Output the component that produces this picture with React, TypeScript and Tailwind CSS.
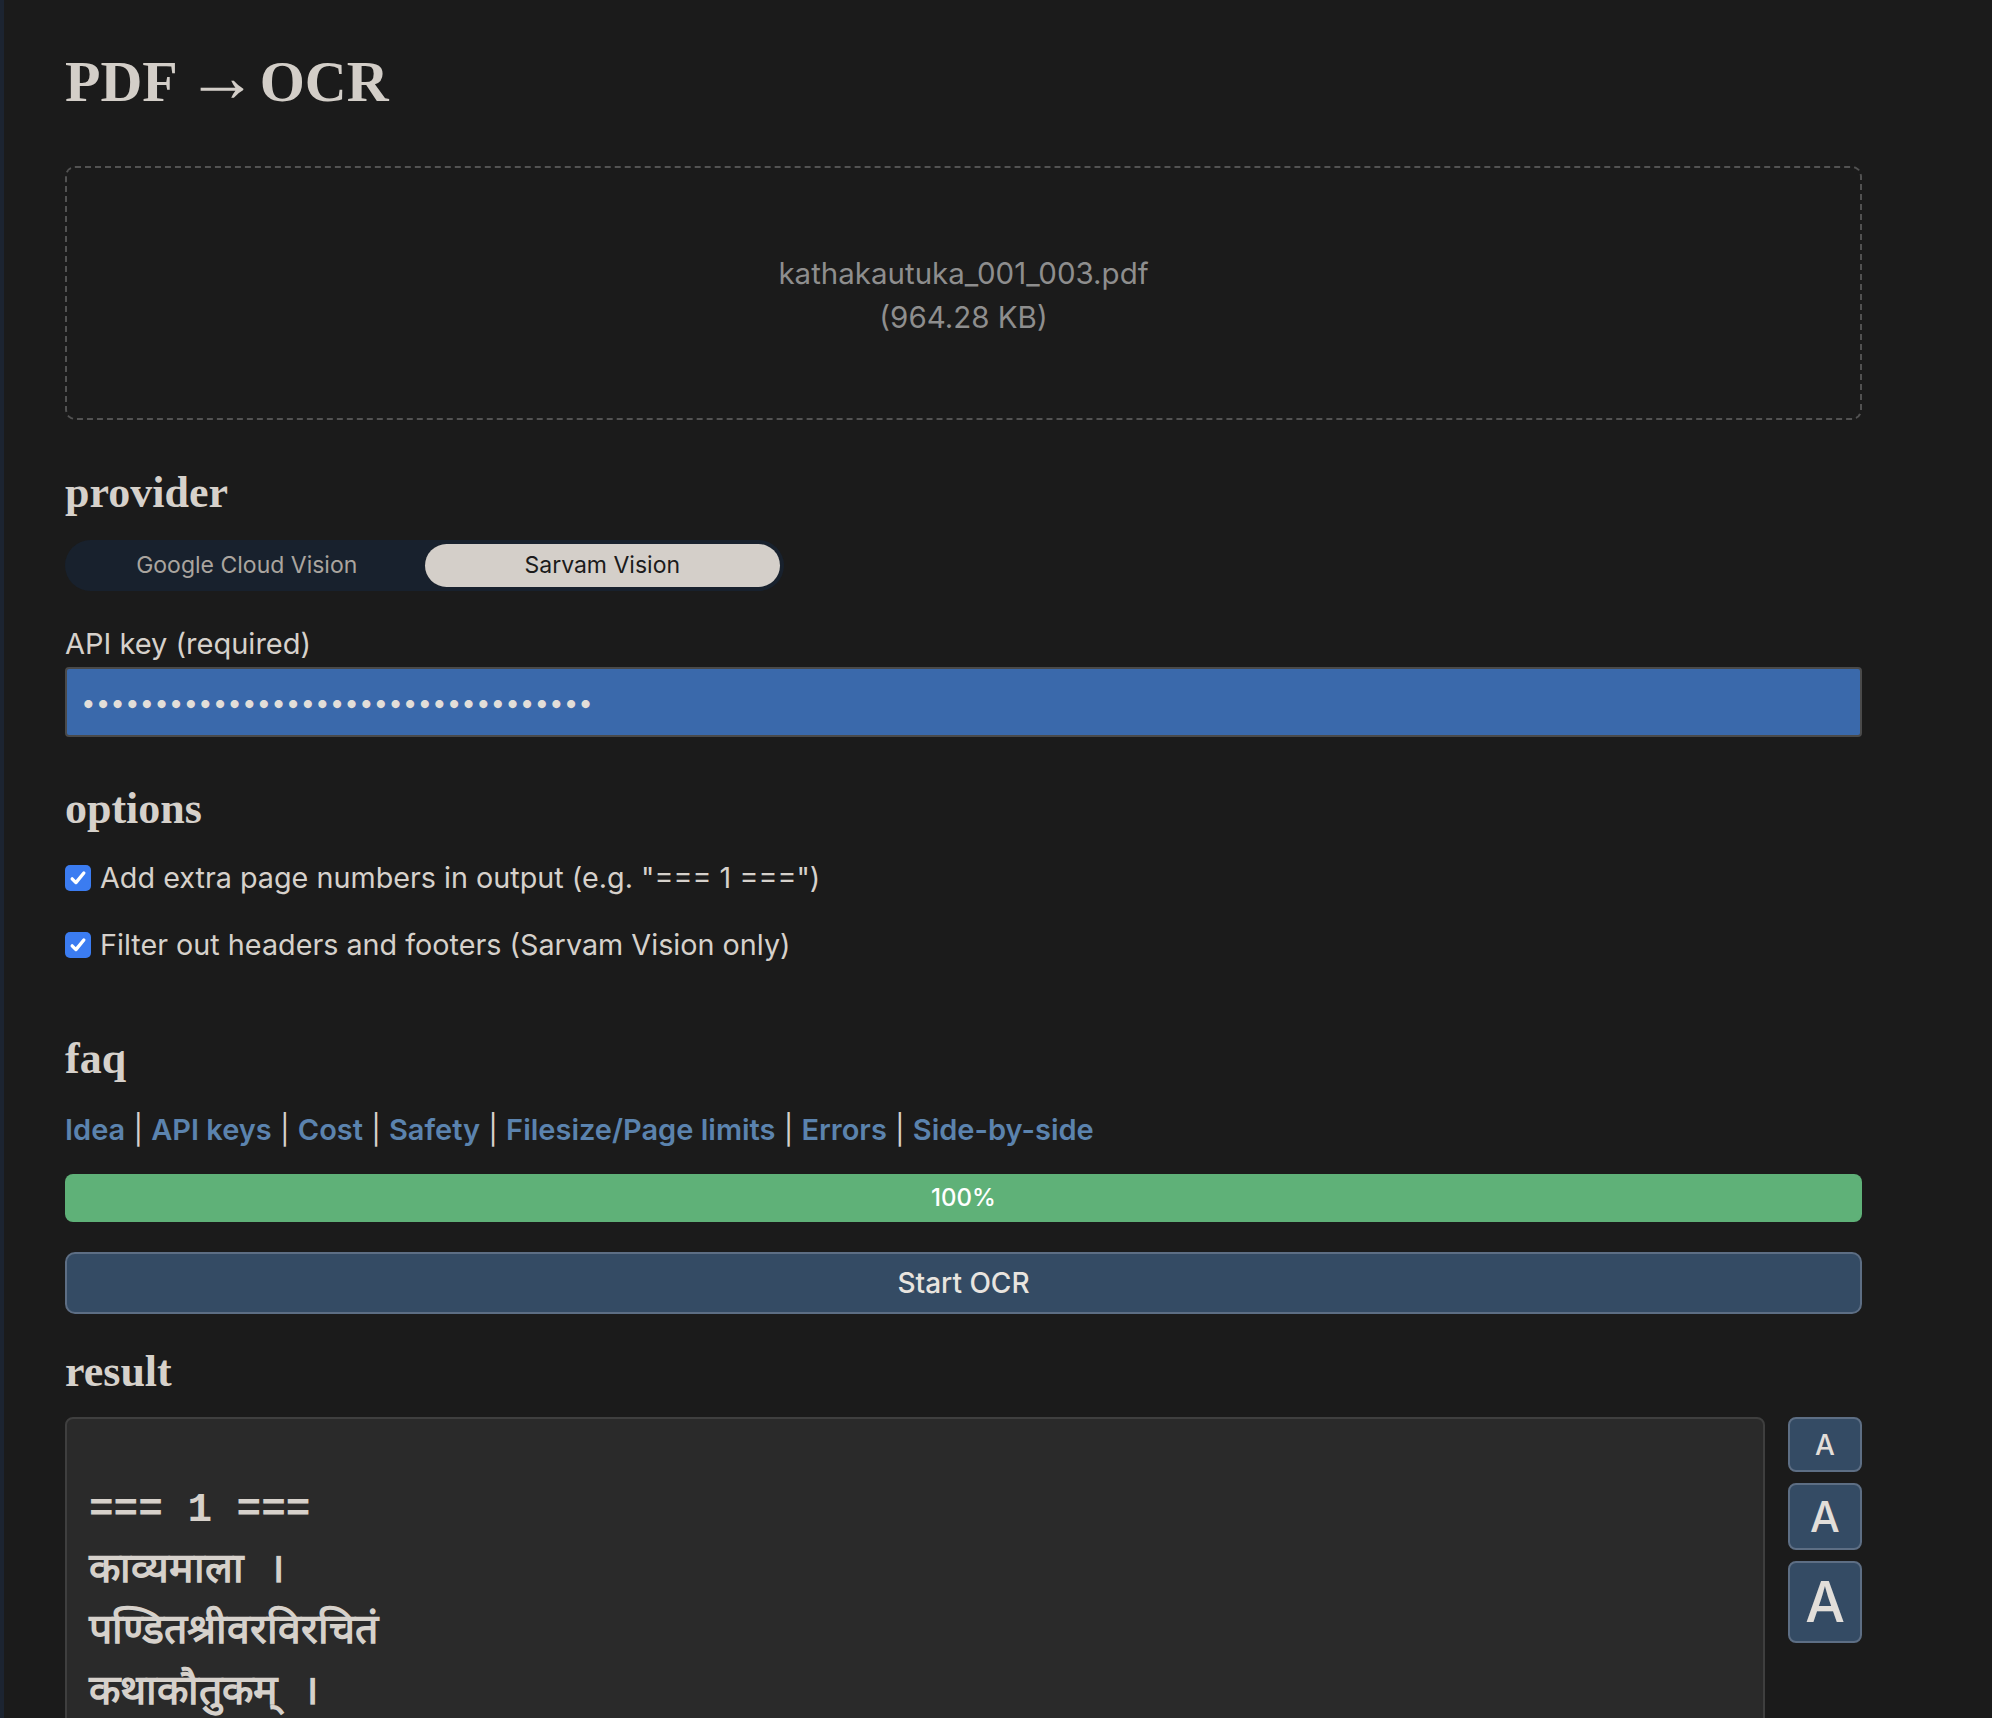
import React from 'react';

const serif = "font-['Liberation_Serif',serif] font-bold";

function Heading({ children, className = '' }: { children: React.ReactNode; className?: string }) {
  return <h2 className={`${serif} text-[44px] leading-[50px] text-[#d6d1cb] ${className}`}>{children}</h2>;
}

function CheckRow({ label, className = '' }: { label: string; className?: string }) {
  return (
    <label className={`flex items-center gap-[9px] h-[36px] ${className}`}>
      <span className="flex h-[26px] w-[26px] items-center justify-center rounded-[5px] bg-[#3b7cf1]">
        <svg viewBox="0 0 24 24" className="h-[20px] w-[20px]" fill="none" stroke="white" strokeWidth="4" strokeLinecap="round" strokeLinejoin="round">
          <path d="M5 13l4.5 4.5L19 6" />
        </svg>
      </span>
      <span className="text-[28.75px] leading-[36px]">{label}</span>
    </label>
  );
}

const faqLinks = ['Idea', 'API keys', 'Cost', 'Safety', 'Filesize/Page limits', 'Errors', 'Side-by-side'];

const resultText = '\n=== 1 ===\nकाव्यमाला ।\nपण्डितश्रीवरविरचितं\nकथाकौतुकम् ।\n\nश्रीः\n';

export default function App() {
  return (
    <div className="min-h-screen bg-[#1b1b1b] border-l-4 border-[#1c2431] text-[#d6d1cb] font-['Inter','Noto_Sans',sans-serif]">
      <div className="ml-[61px] w-[1797px] pt-[47px]">
        <h1 className={`${serif} text-[58px] leading-[70px] text-[#d3cec8]`}>
          PDF<span className="ml-[8px] mr-[2px] font-normal text-[72px] leading-[0px]">→</span>OCR
        </h1>

        {/* drop zone */}
        <div className="mt-[49px] flex h-[254px] flex-col items-center justify-center rounded-[10px] border-2 border-dashed border-[#525252] pt-[3px] text-[29.5px] leading-[44px] text-[#8e8e8e]">
          <span>kathakautuka_001_003.pdf</span>
          <span>(964.28 KB)</span>
        </div>

        <Heading className="mt-[48px]">provider</Heading>
        <div className="mt-[22px] flex h-[51px] w-[719px] rounded-full bg-[#18212d] p-[4px] text-[23px]">
          <button className="flex flex-1 items-center justify-center text-[#aaa59f]">Google Cloud Vision</button>
          <button className="flex flex-1 items-center justify-center rounded-full bg-[#d4cfc9] text-[#1b1b1b]">Sarvam Vision</button>
        </div>

        <div className="mt-[35px] text-[29px] leading-[36px]">API key (required)</div>
        <input
          type="password"
          readOnly
          defaultValue="sk_abcdefghijklmnopqrstuvwxyz012345"
          className="mt-[5px] block h-[70px] w-full rounded-[4px] border-2 border-[#4a4a4a] bg-[#3a69ab] px-[14px] text-[26px] text-[#e2ded9] outline-none"
        />

        <Heading className="mt-[47px]">options</Heading>
        <CheckRow className="mt-[26px]" label={'Add extra page numbers in output (e.g. "=== 1 ===")'} />
        <CheckRow className="mt-[31px]" label="Filter out headers and footers (Sarvam Vision only)" />

        <Heading className="mt-[71px]">faq</Heading>
        <div className="mt-[28px] text-[29px] leading-[36px]">
          {faqLinks.map((l, i) => (
            <React.Fragment key={l}>
              {i > 0 && <span className="text-[#d6d1cb]"> | </span>}
              <a href="#" className="font-semibold text-[#5b83ae]">{l}</a>
            </React.Fragment>
          ))}
        </div>

        <div className="mt-[26px] flex h-[48px] items-center justify-center rounded-[8px] bg-[#5fb178] text-[24px] font-medium text-white">
          100%
        </div>

        <button className="mt-[30px] flex h-[62px] w-full items-center justify-center rounded-[10px] border-2 border-[#5d6e84] bg-[#344b64] text-[28px] font-medium text-[#e8e4df]">
          Start OCR
        </button>

        <Heading className="mt-[33px]">result</Heading>
        <div className="mt-[20px] flex gap-[23px]">
          <textarea
            readOnly
            value={resultText}
            className="h-[520px] flex-1 resize-none rounded-[8px] border-2 border-[#3f3f3f] bg-[#2a2a2a] px-[22px] pt-0 font-['Liberation_Mono',monospace] text-[41px] font-bold leading-[61px] text-[#d6d1cb] outline-none"
          />
          <div className="flex w-[74px] flex-col gap-[11px]">
            <button className="flex h-[55px] items-center justify-center rounded-[8px] border-2 border-[#5d6e84] bg-[#344b64] text-[28px] font-medium text-[#e2ded9]">A</button>
            <button className="flex h-[67px] items-center justify-center rounded-[8px] border-2 border-[#5d6e84] bg-[#344b64] text-[42px] font-medium text-[#e2ded9]">A</button>
            <button className="flex h-[82px] items-center justify-center rounded-[8px] border-2 border-[#5d6e84] bg-[#344b64] text-[56px] font-medium text-[#e2ded9]">A</button>
          </div>
        </div>
      </div>
    </div>
  );
}
